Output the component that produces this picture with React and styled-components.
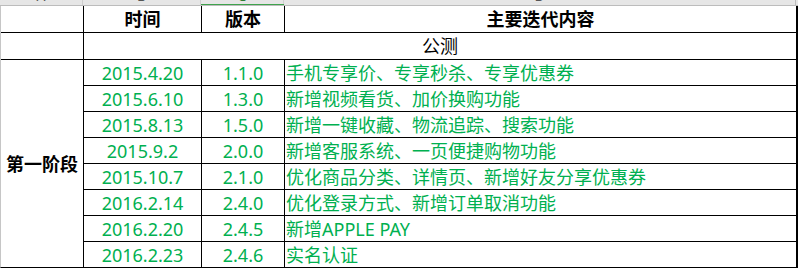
import React from "react";
import styled, { createGlobalStyle } from "styled-components";

const GlobalStyle = createGlobalStyle`
  html, body { margin: 0; padding: 0; background: #ffffff; }
  body { font-family: "Noto Sans", "Noto Sans CJK SC", sans-serif; }
`;

const Sheet = styled.div`
  width: 798px;
  display: flex;
  flex-direction: column;
`;

const HeaderStrip = styled.div`
  display: grid;
  grid-template-columns: 83px 118px 83px 512px 2px;
  height: 5px;
  background: #e6e6e6;
  border-bottom: 1px solid #bcbcbc;
  overflow: hidden;
`;

const ColLetter = styled.div`
  position: relative;
  display: flex;
  align-items: flex-end;
  justify-content: center;
  height: 5px;
  border-right: 1px solid ${(p) => (p.$last ? "#bcbcbc" : "#cfcfcf")};
  font-family: "Noto Sans", sans-serif;
  font-size: 14px;
  line-height: 14px;
  color: ${(p) => (p.$active ? "#2e7d32" : "#555555")};
  box-sizing: border-box;
  & > span {
    margin-bottom: 2px;
  }
  ${(p) =>
    p.$active &&
    `
    &::after {
      content: "";
      position: absolute;
      left: 0;
      right: -1px;
      bottom: -1px;
      height: 2px;
      background: #3fa34d;
    }
  `}
`;

const Grid = styled.div`
  display: grid;
  grid-template-columns: 82px 117px 82px 511px;
  grid-template-rows: 26px 26px repeat(8, 25px);
  column-gap: 1px;
  row-gap: 1px;
  background: #000000;
  border-left: 1px solid #c6c6c6;
  border-right: 2px solid #000000;
  border-bottom: 1px solid #000000;
`;

const Cell = styled.div`
  background: #ffffff;
  display: flex;
  align-items: center;
  justify-content: ${(p) => (p.$align === "left" ? "flex-start" : "center")};
  padding-left: ${(p) => (p.$align === "left" ? "1px" : "0")};
  font-size: 18px;
  line-height: 20px;
  font-weight: ${(p) => (p.$bold ? 700 : 400)};
  color: ${(p) => (p.$green ? "#00b050" : "#000000")};
  white-space: nowrap;
  overflow: hidden;
  grid-column: ${(p) => p.$col || "auto"};
  grid-row: ${(p) => p.$row || "auto"};
`;

const rows = [
  ["2015.4.20", "1.1.0", "手机专享价、专享秒杀、专享优惠券"],
  ["2015.6.10", "1.3.0", "新增视频看货、加价换购功能"],
  ["2015.8.13", "1.5.0", "新增一键收藏、物流追踪、搜索功能"],
  ["2015.9.2", "2.0.0", "新增客服系统、一页便捷购物功能"],
  ["2015.10.7", "2.1.0", "优化商品分类、详情页、新增好友分享优惠券"],
  ["2016.2.14", "2.4.0", "优化登录方式、新增订单取消功能"],
  ["2016.2.20", "2.4.5", "新增APPLE PAY"],
  ["2016.2.23", "2.4.6", "实名认证"],
];

export default function App() {
  return (
    <>
      <GlobalStyle />
      <Sheet>
        <HeaderStrip>
          <ColLetter><span>A</span></ColLetter>
          <ColLetter><span>B</span></ColLetter>
          <ColLetter $active><span>C</span></ColLetter>
          <ColLetter $last><span>D</span></ColLetter>
          <div />
        </HeaderStrip>
        <Grid>
          <Cell />
          <Cell $bold>时间</Cell>
          <Cell $bold>版本</Cell>
          <Cell $bold>主要迭代内容</Cell>

          <Cell />
          <Cell $col="2 / 5">公测</Cell>

          <Cell $bold $col="1" $row="3 / 11">第一阶段</Cell>
          {rows.map(([date, ver, desc]) => (
            <React.Fragment key={date}>
              <Cell $green $col="2">{date}</Cell>
              <Cell $green $col="3">{ver}</Cell>
              <Cell $green $col="4" $align="left">{desc}</Cell>
            </React.Fragment>
          ))}
        </Grid>
      </Sheet>
    </>
  );
}
